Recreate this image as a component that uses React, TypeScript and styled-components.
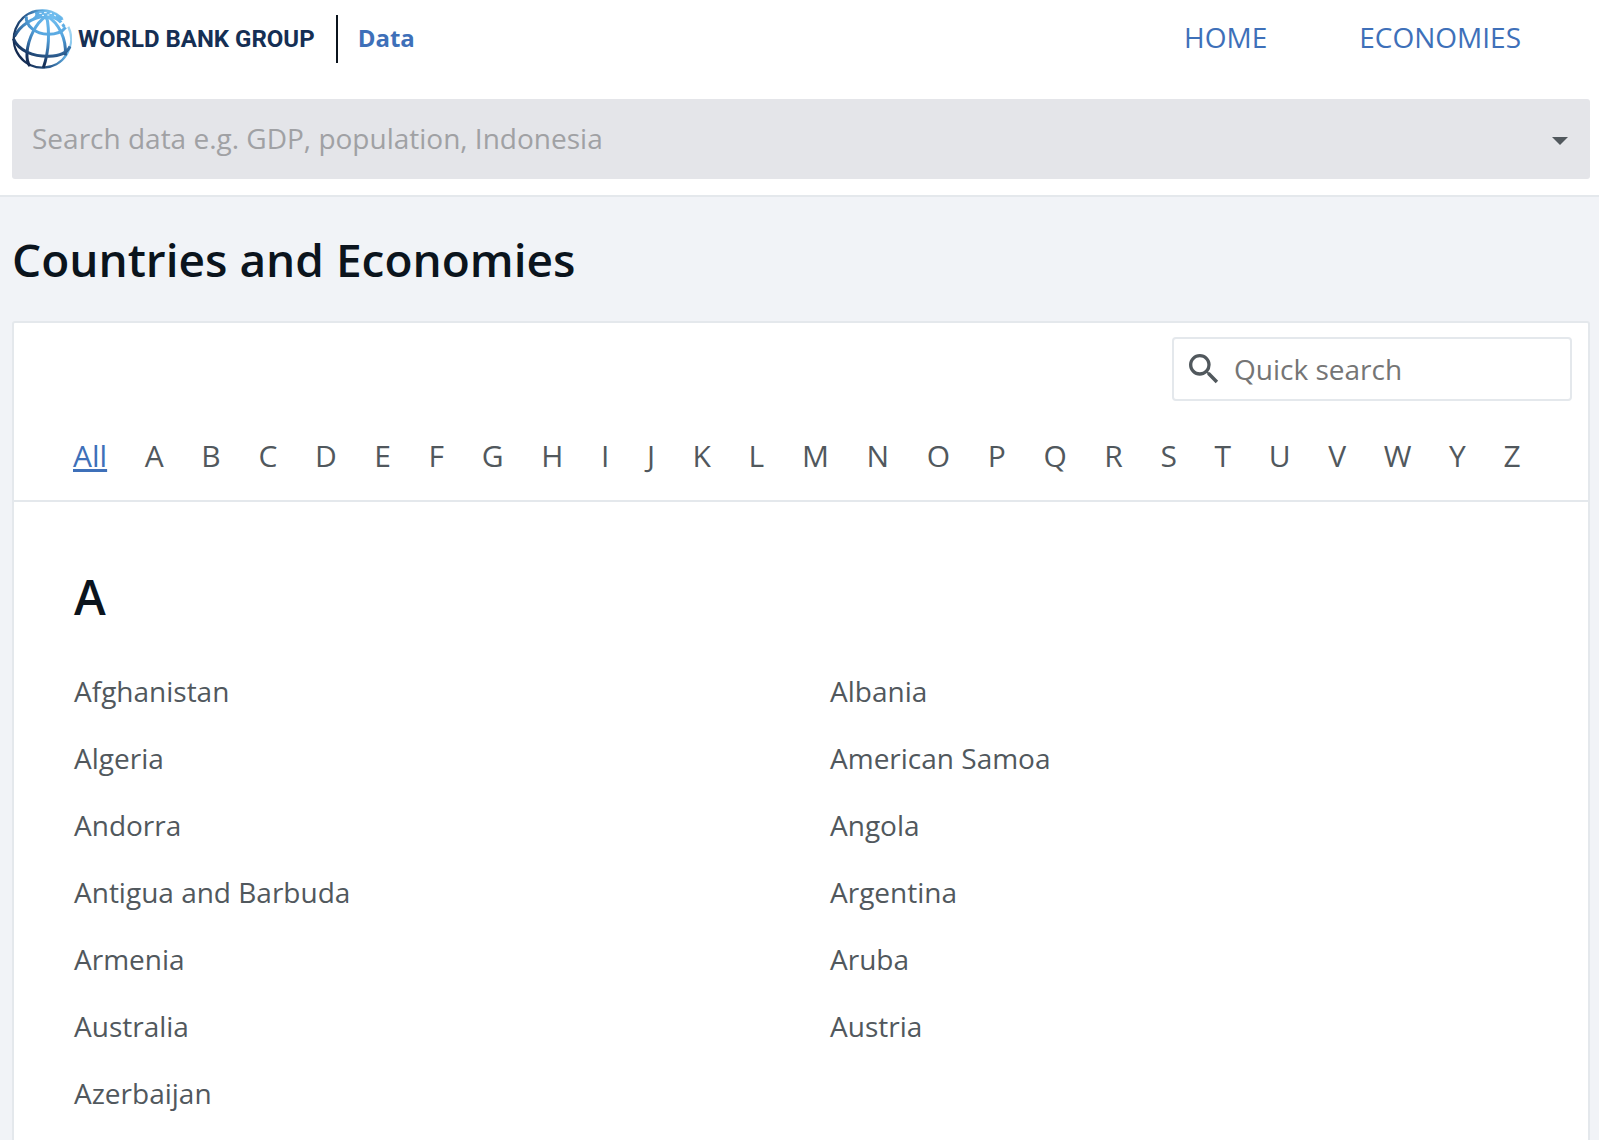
import React, { useState } from "react";
import styled, { createGlobalStyle } from "styled-components";
import { MdSearch } from "react-icons/md";

const blue = "#3e70b9";
const ink = "#0b141d";
const slate = "#51585d";
const line = "#e4e8ec";

const GlobalStyle = createGlobalStyle`
  *, *::before, *::after { box-sizing: border-box; }
  body {
    margin: 0;
    background: #f1f3f7;
    color: ${slate};
    font-family: "Open Sans", sans-serif;
    font-size: 28px;
    line-height: 40px;
  }
  a { color: inherit; text-decoration: none; }
  h1, h2, ul { margin: 0; padding: 0; }
  ul { list-style: none; }
  input, button { font: inherit; }
`;

const Header = styled.header`
  background: #fff;
  border-bottom: 2px solid ${line};
  padding: 9px 9px 16px 12px;
`;

const TopBar = styled.div`
  display: flex;
  align-items: center;
  justify-content: space-between;
  height: 60px;
  margin-bottom: 30px;
  padding-right: 69px;
`;

const Brand = styled.div`
  display: flex;
  align-items: center;
`;

const LogoLink = styled.a`
  display: flex;
  align-items: center;
  gap: 6px;
  padding-right: 21px;
  border-right: 2px solid ${ink};
  height: 48px;
  color: #152f54;
  font-family: Roboto, sans-serif;
  font-size: 24px;
  font-weight: 700;
  white-space: nowrap;
`;

const DataLink = styled.a`
  padding: 0 0 2px 20px;
  color: ${blue};
  font-size: 24px;
  font-weight: 700;
`;

const MainNav = styled.nav`
  display: flex;
  gap: 92px;
  padding-bottom: 4px;
  color: ${blue};
`;

const SearchBar = styled.div`
  display: flex;
  align-items: center;
  height: 80px;
  padding: 0 18px 0 20px;
  background: #e4e5e9;
  border-radius: 3px;
`;

const SearchInput = styled.input<{ $hint: string }>`
  flex: 1;
  min-width: 0;
  height: 40px;
  padding: 0;
  border: 0;
  outline: 0;
  background: transparent;
  color: ${slate};
  font-kerning: normal;
  text-rendering: optimizeLegibility;
  &::placeholder { color: ${(p) => p.$hint}; opacity: 1; }
`;

const DataSearchInput = styled(SearchInput)`
  height: 42px;
  padding-bottom: 2px;
`;

const ArrowButton = styled.button`
  display: flex;
  align-items: center;
  justify-content: center;
  width: 24px;
  height: 40px;
  padding: 4px 0 0;
  border: 0;
  background: transparent;
  &::before {
    content: "";
    border: 8px solid transparent;
    border-top-color: ${slate};
    border-bottom: 0;
  }
`;

const Main = styled.main`
  padding: 30px 9px 0 12px;
`;

const Title = styled.h1`
  margin-bottom: 30px;
  color: ${ink};
  font-size: 46px;
  font-weight: 600;
  line-height: 64px;
`;

const Panel = styled.section`
  background: #fff;
  border: 2px solid ${line};
  border-radius: 3px;
`;

const PanelHead = styled.div`
  padding: 14px 16px 24px 59px;
  border-bottom: 2px solid ${line};
`;

const QuickSearch = styled.label`
  display: flex;
  align-items: center;
  gap: 10px;
  width: 400px;
  height: 64px;
  margin: 0 0 35px auto;
  padding: 0 10px;
  border: 2px solid ${line};
  border-radius: 4px;
`;

const Letters = styled.nav`
  display: flex;
  flex-wrap: wrap;
  justify-content: space-between;
  padding-right: 51px;
  font-size: 30px;
`;

const LetterLink = styled.a<{ $active: boolean }>`
  color: ${(p) => (p.$active ? blue : slate)};
  text-decoration: ${(p) => (p.$active ? "underline" : "none")};
  text-decoration-thickness: 3px;
`;

const Group = styled.section`
  padding: 63px 60px 60px;
`;

const GroupTitle = styled.h2`
  margin-bottom: 29px;
  color: ${ink};
  font-size: 48px;
  font-weight: 600;
  line-height: 64px;
`;

const CountryList = styled.ul`
  display: grid;
  grid-template-columns: 1fr 1fr;
  column-gap: 58px;
  line-height: 67px;
`;

const letters = ["All", ..."ABCDEFGHIJKLMNOPQRSTUVWYZ"];

const countries = [
  "Afghanistan", "Albania", "Algeria", "American Samoa", "Andorra", "Angola",
  "Antigua and Barbuda", "Argentina", "Armenia", "Aruba", "Australia", "Austria",
  "Azerbaijan",
];

function Globe() {
  return (
    <svg width="60" height="60" viewBox="0 0 180 180" fill="none" aria-hidden="true">
      <defs>
        <radialGradient id="globeShade" gradientUnits="userSpaceOnUse" cx="122" cy="22" r="165">
          <stop offset="0" stopColor="#72bff0" />
          <stop offset="0.4" stopColor="#55a5df" />
          <stop offset="0.65" stopColor="#356fa6" />
          <stop offset="0.85" stopColor="#17335d" />
          <stop offset="1" stopColor="#13294e" />
        </radialGradient>
        <linearGradient id="globeRim" gradientUnits="userSpaceOnUse" x1="10" y1="120" x2="176" y2="40">
          <stop offset="0" stopColor="#13294e" />
          <stop offset="0.4" stopColor="#2c5d91" />
          <stop offset="0.7" stopColor="#62b2e6" />
          <stop offset="1" stopColor="#b4dff5" />
        </linearGradient>
      </defs>
      <path d="M151 28A86 86 0 1 0 169 53" stroke="url(#globeRim)" strokeWidth="7" />
      <path d="M66 10Q100 0 132 13Q147 20 155 31L144 36Q132 27 112 27L103 34L94 26Q80 24 62 27Q76 18 66 10Z" fill="url(#globeShade)" />
      <g stroke="url(#globeShade)" strokeWidth="9">
        <path d="M102 22C72 42 48 88 45 132C44 150 47 163 54 171" />
        <path d="M104 22C113 65 112 125 94 176" />
        <path d="M106 22C139 42 164 88 160 139" />
        <path d="M98 22C62 26 26 47 7 83" />
        <path d="M43 22C40 49 70 75 109 76C134 76 151 68 161 55" />
        <path d="M4 89C20 127 66 143 111 142C143 141 166 130 174 112" />
        <path d="M108 22C130 24 148 37 157 54" />
      </g>
      <path d="M82 13h7M96 11h8M113 13h7M126 18l6 3M90 19h6M106 18h6" stroke="#fff" strokeWidth="3" />
      <path d="M145 46L164 32" stroke="#fff" strokeWidth="7" />
    </svg>
  );
}

export default function App() {
  const [active, setActive] = useState("All");
  return (
    <>
      <GlobalStyle />
      <Header>
        <TopBar>
          <Brand>
            <LogoLink href="#">
              <Globe />
              <span>WORLD BANK GROUP</span>
            </LogoLink>
            <DataLink href="#">Data</DataLink>
          </Brand>
          <MainNav>
            <a href="#">HOME</a>
            <a href="#">ECONOMIES</a>
          </MainNav>
        </TopBar>
        <SearchBar>
          <DataSearchInput
            $hint="#a0a1a4"
            aria-label="Search data"
            placeholder="Search data e.g. GDP, population, Indonesia"
          />
          <ArrowButton type="button" aria-label="Open list" />
        </SearchBar>
      </Header>
      <Main>
        <Title>Countries and Economies</Title>
        <Panel>
          <PanelHead>
            <QuickSearch>
              <MdSearch size={40} aria-hidden="true" />
              <SearchInput $hint="#757575" aria-label="Quick search" placeholder="Quick search" />
            </QuickSearch>
            <Letters>
              {letters.map((l) => (
                <LetterLink key={l} href="#" $active={l === active} onClick={() => setActive(l)}>
                  {l}
                </LetterLink>
              ))}
            </Letters>
          </PanelHead>
          <Group>
            <GroupTitle>A</GroupTitle>
            <CountryList>
              {countries.map((c) => (
                <li key={c}>
                  <a href="#">{c}</a>
                </li>
              ))}
            </CountryList>
          </Group>
        </Panel>
      </Main>
    </>
  );
}
